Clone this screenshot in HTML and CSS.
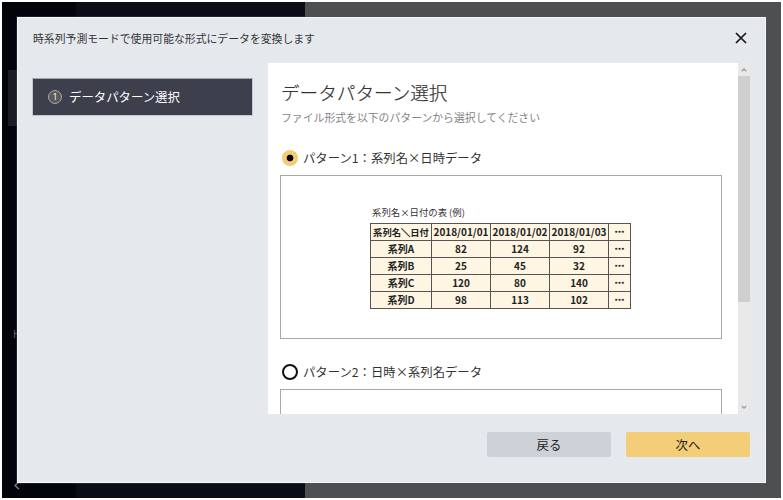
FILE: index.html
```html
<!DOCTYPE html>
<html lang="ja">
<head>
<meta charset="utf-8">
<title>データパターン選択</title>
<link rel="stylesheet" href="styles.css">
</head>
<body>
<div class="app">
  <div class="backdrop-nav"><span class="nav-item"></span><span class="nav-text">H</span>
    <svg class="nav-back" viewBox="0 0 6 9"><path d="M5 .8 1 4.5l4 3.7"/></svg>
  </div>
  <div class="backdrop-list"></div>
  <div class="backdrop-main"></div>
  <section class="modal" role="dialog">
    <header class="modal-header">
      <span class="modal-message">時系列予測モードで使用可能な形式にデータを変換します</span>
      <svg class="close" viewBox="0 0 12 12"><path d="M1 1l10 10M11 1 1 11"/></svg>
    </header>
    <div class="modal-body">
      <nav class="steps">
        <div class="step"><span class="step-number">1</span><span class="step-label">データパターン選択</span></div>
      </nav>
      <div class="panel">
        <main class="content">
          <h1>データパターン選択</h1>
          <p class="hint">ファイル形式を以下のパターンから選択してください</p>
          <div class="option"><span class="radio selected"></span><span class="option-label">パターン1：系列名×日時データ</span></div>
          <div class="preview">
            <div class="sample">
              <div class="caption">系列名×日付の表 (例)</div>
              <table>
                <colgroup><col class="c-name"><col class="c-date"><col class="c-date"><col class="c-date"><col class="c-more"></colgroup>
                <tr><th>系列名<span class="slash">＼</span>日付</th><th>2018/01/01</th><th>2018/01/02</th><th>2018/01/03</th><th>⋯</th></tr>
                <tr><td>系列A</td><td>82</td><td>124</td><td>92</td><td>⋯</td></tr>
                <tr><td>系列B</td><td>25</td><td>45</td><td>32</td><td>⋯</td></tr>
                <tr><td>系列C</td><td>120</td><td>80</td><td>140</td><td>⋯</td></tr>
                <tr><td>系列D</td><td>98</td><td>113</td><td>102</td><td>⋯</td></tr>
              </table>
            </div>
          </div>
          <div class="option second"><span class="radio"></span><span class="option-label">パターン2：日時×系列名データ</span></div>
          <div class="preview"></div>
        </main>
        <div class="scrollbar">
          <svg viewBox="0 0 12 13"><path d="M3.8 8.2 6 6l2.2 2.2"/></svg>
          <div class="thumb"></div>
          <svg class="down" viewBox="0 0 12 13"><path d="M3.8 5 6 7.2 8.2 5"/></svg>
        </div>
      </div>
    </div>
    <footer class="actions">
      <button class="back">戻る</button>
      <button class="next">次へ</button>
    </footer>
  </section>
</div>
</body>
</html>
```
FILE: styles.css
```css
* { box-sizing: border-box; }
body {
  margin: 0;
  padding: 2px;
  width: 783px;
  height: 500px;
  overflow: hidden;
  background: #fff;
  color: #333;
  font-family: "Noto Sans CJK JP", sans-serif;
}
.app { position: relative; display: flex; height: 496px; overflow: hidden; }
.backdrop-nav { position: relative; width: 74px; background: #02040c; }
.backdrop-list { width: 229px; background: #0a0d15; }
.backdrop-main { flex: 1; background: #4e4f51; }
.nav-item { position: absolute; left: 6px; top: 68px; width: 30px; height: 56px; background: #1b1b24; }
.nav-text { position: absolute; left: 11px; top: 325px; color: #62666d; font-size: 10px; line-height: 14px; }
.nav-back { position: absolute; left: 12px; top: 479px; width: 6px; height: 9px; fill: none; stroke: #85878a; stroke-width: 1.2; }

.modal {
  position: absolute;
  left: 15px;
  top: 15px;
  width: 749px;
  height: 466px;
  display: flex;
  flex-direction: column;
  padding: 0 15px;
  background: #e5e9ee;
  border: 1px solid #f5f7f8;
  outline: 1px solid #55585b55;
}
.modal-header { display: flex; align-items: center; justify-content: space-between; height: 45px; padding: 0 3px 5px 0; }
.modal-message { font-size: 10.85px; line-height: 16px; }
.close { width: 12px; height: 12px; fill: none; stroke: #161616; stroke-width: 1.7; }
.modal-body { display: flex; height: 351px; }
.steps { width: 235px; padding-top: 15px; }
.step {
  display: flex;
  align-items: center;
  width: 221px;
  height: 38px;
  margin-left: -1px;
  padding-left: 16px;
  background: #3e3f4d;
  border: 1px solid #c5c7ce;
  border-top-color: #a3a5ad;
  color: #fff;
}
.step-number {
  width: 14px;
  height: 14px;
  margin: 0 7px 0 -1px;
  border: 1px solid #aaa;
  border-radius: 50%;
  background: #5b5b5b;
  font-family: "Open Sans", sans-serif;
  font-size: 9px;
  line-height: 12px;
  text-align: center;
}
.step-label { font-size: 12.4px; line-height: 18px; }
.panel { display: flex; flex: 1; background: #fff; overflow: hidden; }
.content { flex: 1; height: 351px; padding: 0 16px 0 12px; overflow: hidden; }
h1 { margin: 15px 0 0 1px; font-size: 18.6px; line-height: 28px; font-weight: 300; white-space: nowrap; -webkit-text-stroke: .2px #333; }
.hint { margin: 3px 0 0 1px; color: #858585; font-size: 10.85px; line-height: 16px; }
.option { display: flex; align-items: center; height: 18px; margin-top: 24px; padding-left: 2px; }
.radio { width: 16px; height: 16px; border: 2px solid #111; border-radius: 50%; background: #fff; }
.radio.selected { border: 0; background: radial-gradient(circle, #000 0 3px, #f3cc74 3.7px); }
.option-label { margin-left: 5px; font-size: 12.35px; line-height: 18px; white-space: nowrap; }
.preview { display: flex; justify-content: center; width: 442px; height: 164px; margin-top: 8px; padding-top: 28px; border: 1px solid #a9a9a9; }
.sample { width: 260px; margin-right: 2px; }
.caption { padding-left: 2px; font-size: 9.4px; line-height: 16px; margin-bottom: 3px; }
table { width: 260px; table-layout: fixed; border-collapse: collapse; background: #fef5e3; color: #222; font-size: 10px; font-weight: 700; line-height: 14px; text-align: center; border: 1px solid #555; }
.c-name { width: 61px; }
.c-date { width: 59px; }
.c-more { width: 22px; }
tr { height: 17px; }
th, td { padding: 0; border: 1px solid #555; white-space: nowrap; height: 17px; }
th:first-child { font-size: 9.3px; }
.slash, th:last-child, td:last-child { -webkit-text-stroke: .4px #222; }
.scrollbar { display: flex; flex-direction: column; width: 12px; background: #e9e9e9; }
.scrollbar svg { width: 12px; height: 13px; fill: none; stroke: #9a9a9a; stroke-width: 1.3; }
.thumb { height: 226px; background: #cfcfcf; }
.down { margin-top: auto; }
.actions { display: flex; justify-content: flex-end; gap: 15px; padding-top: 18px; }
.actions button { width: 124px; height: 25px; padding: 1px 0 0; border: 0; border-radius: 2px; color: #222; font: 12.4px/24px "Noto Sans CJK JP", sans-serif; }
.back { background: #cfd1d9; }
.actions .next { background: #f3cd77; }
```
